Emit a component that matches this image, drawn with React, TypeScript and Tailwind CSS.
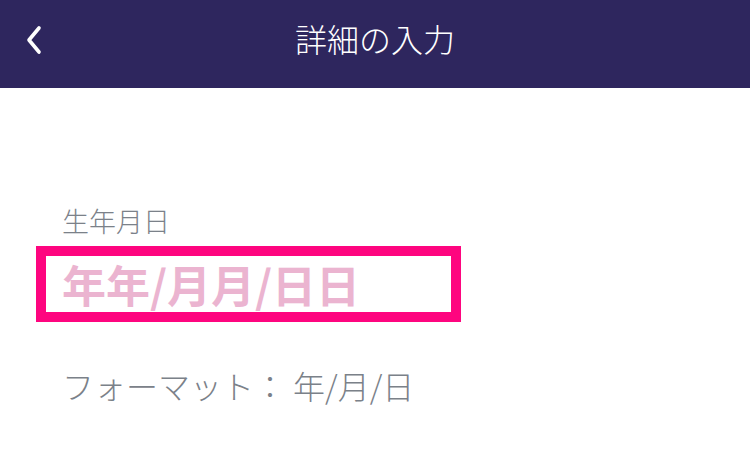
export default function App() {
  const font = { fontFamily: '"Noto Sans CJK JP", "Noto Sans", sans-serif' };
  return (
    <div className="w-[750px] h-[453px] bg-white overflow-hidden" style={font}>
      <header className="h-[88px] bg-[#2e265e] flex items-center relative">
        <svg className="absolute left-[24px] top-[25px]" width="20" height="30" viewBox="0 0 20 30">
          <path d="M15 3 L5 15 L15 27" fill="none" stroke="white" strokeWidth="3.6" strokeLinecap="round" strokeLinejoin="round" />
        </svg>
        <h1 className="w-full text-center text-white text-[32px] font-light leading-none -mt-[12px]">詳細の入力</h1>
      </header>
      <div className="pt-[119px] pl-[36px]">
        <div className="pl-[26px] text-[27px] leading-none text-[#7b8189] font-light">生年月日</div>
        <div className="mt-[12px] w-[425px] h-[76px] border-[10px] border-[#fe057f] flex items-center pl-[16px]">
          <span className="text-[44px] font-bold text-[#ebb4d0] leading-none">年年/月月/日日</span>
        </div>
        <div className="mt-[47px] pl-[26px] text-[32px] leading-none text-[#7b8189] font-light">フォーマット： 年/月/日</div>
      </div>
    </div>
  );
}
